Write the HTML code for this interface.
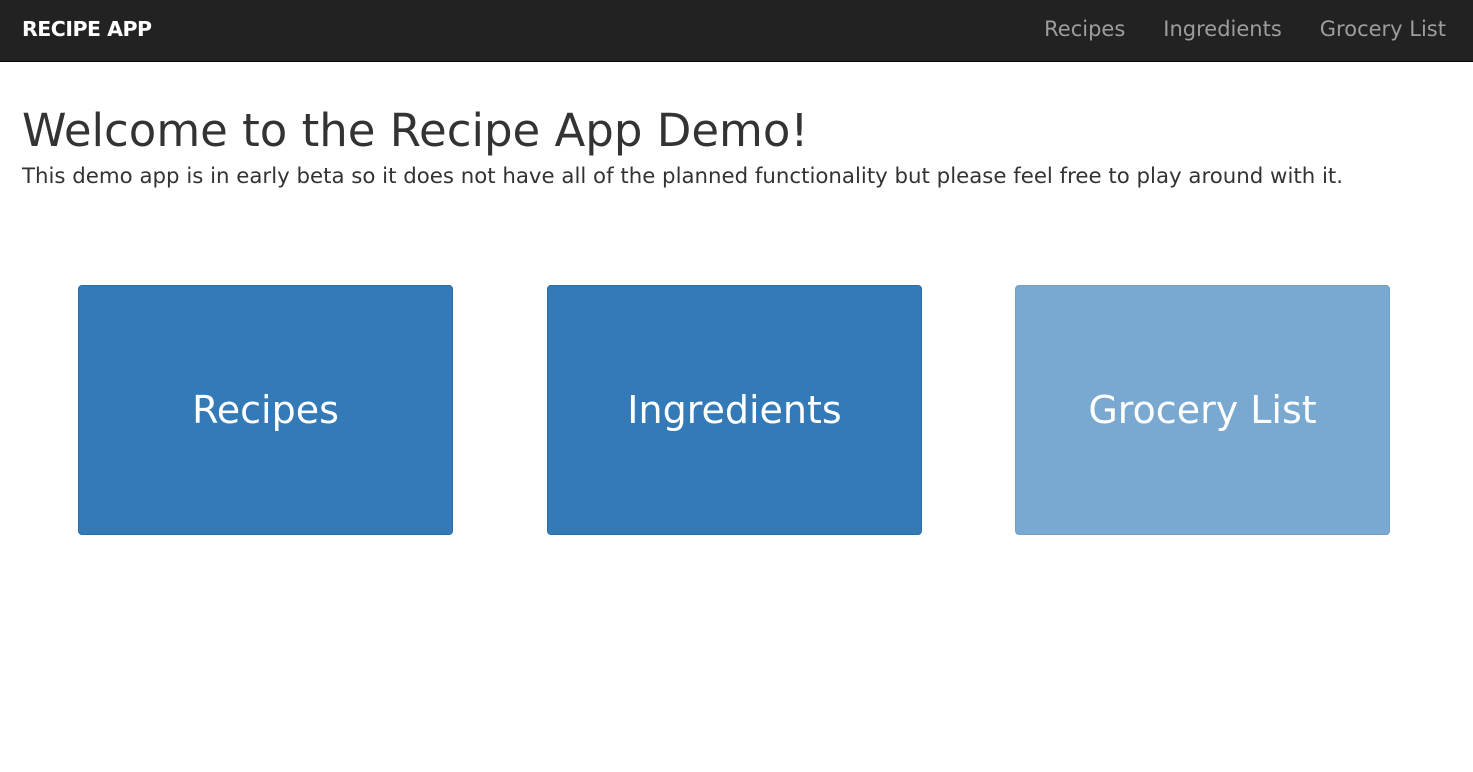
<!DOCTYPE html>
<html><head><meta charset="utf-8"><style>
*{box-sizing:border-box;margin:0;padding:0}
body{width:1473px;height:772px;background:#fff;font-family:"DejaVu Sans","Liberation Sans",sans-serif;color:#333;overflow:hidden}
.nav{height:62px;background:#222;border-bottom:1px solid #080808;position:relative}
.brand{position:absolute;left:22px;top:17px;color:#fff;font-weight:bold;font-size:20.5px;letter-spacing:-0.5px}
.links{position:absolute;right:27px;top:17px;font-size:21px;color:#9d9d9d}
.links span{margin-left:38px}
h1{position:absolute;left:22px;top:104px;font-weight:normal;font-size:45px;color:#333;white-space:nowrap}
p{position:absolute;left:22px;top:164px;font-size:21.3px;white-space:nowrap}
.b{position:absolute;top:285px;width:375px;height:250px;background:#337ab7;border:1px solid #2e6da4;border-radius:4px;color:#fff;font-size:38px;display:flex;align-items:center;justify-content:center;padding-bottom:0}
</style></head><body>
<div class="nav"><div class="brand">RECIPE APP</div><div class="links"><span>Recipes</span><span>Ingredients</span><span>Grocery List</span></div></div>
<h1>Welcome to the Recipe App Demo!</h1>
<p>This demo app is in early beta so it does not have all of the planned functionality but please feel free to play around with it.</p>
<div class="b" style="left:78px">Recipes</div>
<div class="b" style="left:547px">Ingredients</div>
<div class="b" style="left:1015px;opacity:.65">Grocery List</div>
</body></html>
